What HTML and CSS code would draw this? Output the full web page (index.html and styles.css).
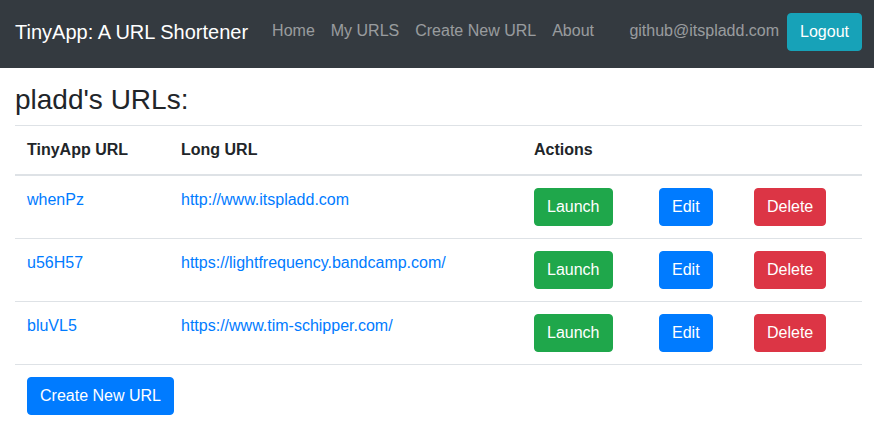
FILE: index.html
```html
<!DOCTYPE html>
<html lang="en">
<head>
<meta charset="utf-8">
<title>TinyApp</title>
<link rel="stylesheet" href="styles.css">
</head>
<body>
<nav class="navbar">
  <a class="brand" href="#">TinyApp: A URL Shortener</a>
  <ul class="nav">
    <li><a class="nav-link" href="#">Home</a></li>
    <li><a class="nav-link" href="#">My URLS</a></li>
    <li><a class="nav-link" href="#">Create New URL</a></li>
    <li><a class="nav-link" href="#">About</a></li>
  </ul>
  <div class="user">
    <span class="nav-text">github@itspladd.com</span>
    <button class="btn btn-info">Logout</button>
  </div>
</nav>
<main class="container">
  <h3 class="title">pladd's URLs:</h3>
  <table class="table">
    <colgroup>
      <col class="c1"><col class="c2"><col class="c3"><col class="c4"><col class="c5">
    </colgroup>
    <thead>
      <tr><th>TinyApp URL</th><th>Long URL</th><th>Actions</th><th></th><th></th></tr>
    </thead>
    <tbody>
      <tr>
        <td><a href="#">whenPz</a></td>
        <td><a href="#">http://www.itspladd.com</a></td>
        <td><button class="btn btn-success">Launch</button></td>
        <td><button class="btn btn-primary">Edit</button></td>
        <td><button class="btn btn-danger">Delete</button></td>
      </tr>
      <tr>
        <td><a href="#">u56H57</a></td>
        <td><a href="#">https://lightfrequency.bandcamp.com/</a></td>
        <td><button class="btn btn-success">Launch</button></td>
        <td><button class="btn btn-primary">Edit</button></td>
        <td><button class="btn btn-danger">Delete</button></td>
      </tr>
      <tr>
        <td><a href="#">bluVL5</a></td>
        <td><a href="#">https://www.tim-schipper.com/</a></td>
        <td><button class="btn btn-success">Launch</button></td>
        <td><button class="btn btn-primary">Edit</button></td>
        <td><button class="btn btn-danger">Delete</button></td>
      </tr>
      <tr>
        <td colspan="5"><button class="btn btn-primary">Create New URL</button></td>
      </tr>
    </tbody>
  </table>
</main>
</body>
</html>
```

FILE: styles.css
```css
* { box-sizing: border-box; }
html, body {
  margin: 0;
  font-family: "Liberation Sans", Arial, sans-serif;
  font-size: 16px;
  line-height: 1.5;
  color: #212529;
  background: #fff;
}
a { text-decoration: none; color: #007bff; }

.navbar {
  display: flex;
  align-items: center;
  background: #343a40;
  height: 68px;
  padding: 0 12px 4px 15px;
}
.brand {
  color: #fff;
  font-size: 20px;
  line-height: 30px;
  padding: 4px 0;
  margin-right: 16px;
}
.nav {
  display: flex;
  list-style: none;
  margin: 0;
  padding: 0;
}
.nav-link {
  display: block;
  padding: 6px 8px 8px;
  color: rgba(255, 255, 255, 0.5);
}
.user {
  margin-left: auto;
  display: flex;
  align-items: center;
  gap: 8px;
}
.nav-text {
  color: rgba(255, 255, 255, 0.5);
  padding-bottom: 2px;
}

.btn {
  display: inline-block;
  font-family: inherit;
  font-size: 16px;
  line-height: 24px;
  padding: 6px 12px;
  border: 1px solid transparent;
  border-radius: 4px;
  color: #fff;
  cursor: pointer;
}
.btn-info { background: #17a2b8; border-color: #17a2b8; }
.btn-success { background: #1fa74b; border-color: #1fa74b; }
.btn-primary { background: #007bff; border-color: #007bff; }
.btn-danger { background: #dc3545; border-color: #dc3545; }

.container {
  padding: 15px 12px 0 15px;
}
.title {
  font-size: 28px;
  font-weight: 500;
  line-height: 1.2;
  margin: 0 0 8px;
}
.table {
  width: 100%;
  border-collapse: collapse;
  table-layout: fixed;
  margin-bottom: 16px;
}
.c1 { width: 154px; }
.c2 { width: 353px; }
.c3 { width: 125px; }
.c4 { width: 95px; }
.table th, .table td {
  padding: 12px;
  vertical-align: top;
  border-top: 1px solid #dee2e6;
  text-align: left;
}
.table thead th {
  border-bottom: 2px solid #dee2e6;
  vertical-align: bottom;
  font-weight: bold;
}
```
